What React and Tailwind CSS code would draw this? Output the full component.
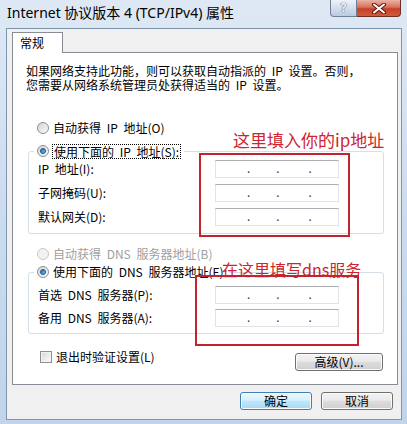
import React from "react";

function Radio({ checked, disabled }) {
    return (
        <span
            className={`flex h-[12px] w-[12px] shrink-0 items-center justify-center rounded-full border ${
                disabled
                    ? "border-[#c9cacb] bg-[#f2f2f2]"
                    : "border-[#8e8f8f] bg-gradient-to-br from-[#d4d4d4] to-[#fbfbfb]"
            }`}
        >
            {checked && (
                <span className="h-[6px] w-[6px] rounded-full border border-[#1b4f8a] bg-gradient-to-br from-[#2a6cb8] to-[#6fc2f3]" />
            )}
        </span>
    );
}

function IpBox() {
    return (
        <div className="flex h-[18px] w-[124px] items-center border border-[#e2e3ea] border-t-[#abadb3] bg-white font-['Noto_Sans',sans-serif] text-[12px] leading-[12px] text-[#333] [word-spacing:0]">
            <span className="ml-[31px]">.</span>
            <span className="ml-[26px]">.</span>
            <span className="ml-[29px]">.</span>
        </div>
    );
}

function Row({ label }) {
    return (
        <div className="flex h-[18px] items-center">
            <div className="w-[186px] pl-[9px]">{label}</div>
            <IpBox />
        </div>
    );
}

function WinButton({ children, primary, className = "" }) {
    return (
        <div
            className={`flex h-[18px] items-center justify-center rounded-[3px] border ${
                primary
                    ? "border-[#3c7fb1] bg-[linear-gradient(#eaf6fd,#d9f0fc_45%,#bee6fd_50%,#a7d9f5)]"
                    : "border-[#707070] bg-[linear-gradient(#f2f2f2,#ebebeb_45%,#dddddd_50%,#cfcfcf)]"
            } shadow-[inset_0_0_0_1px_#fbfbfb] ${className}`}
        >
            {children}
        </div>
    );
}

export default function App() {
    return (
        <div className="relative flex h-[424px] w-[407px] flex-col overflow-hidden bg-gradient-to-b from-[#dfe9f5] via-[#cbdcef] to-[#c0d4eb] text-black">
            {/* title bar */}
            <div className="flex h-[28px] shrink-0 items-start">
                <div className="pl-[7px] pt-[5px] font-['Noto_Sans','Noto_Sans_CJK_SC',sans-serif] text-[14px] leading-[16px]">
                    Internet 协议版本 4 (TCP/IPv4) 属性
                </div>
                <div className="ml-auto mr-[6px] flex">
                    <div className="flex h-[17px] w-[27px] items-center justify-center rounded-bl-[4px] border border-t-0 border-[#6f7f94] bg-[linear-gradient(#eef3f9,#d3dfec_50%,#b9cbe0)] font-['Noto_Sans',sans-serif] text-[12px] font-bold leading-none text-[#f6f8fb] [text-shadow:0_0_1px_#42566e,0_0_1px_#42566e]">
                        ?
                    </div>
                    <div className="flex h-[17px] w-[44px] items-center justify-center rounded-br-[4px] border border-l-0 border-t-0 border-[#6e3024] bg-[linear-gradient(#eab3a4,#d8705a_45%,#c7402a_55%,#d05a3c)]">
                        <svg width="14" height="11" viewBox="0 0 14 11">
                            <path d="M2 1.5 L12 9.5 M12 1.5 L2 9.5" stroke="#5a1a10" strokeWidth="4" strokeLinecap="round" />
                            <path d="M2 1.5 L12 9.5 M12 1.5 L2 9.5" stroke="#ffffff" strokeWidth="2" strokeLinecap="round" />
                        </svg>
                    </div>
                </div>
            </div>

            {/* client area */}
            <div className="mb-[4px] ml-[6px] mr-[5px] flex flex-1 flex-col border border-[#7f94ad] bg-[#f0f0f0] pl-[5px] pr-[3px] pt-[3px] font-['Noto_Sans_CJK_SC',sans-serif] text-[12px] leading-[16px] [word-spacing:3px]">
                <div className="relative z-10 -mb-px flex h-[21px] w-[51px] items-center border border-b-0 border-[#898c95] bg-white pl-[7px]">
                    常规
                </div>
                <div className="flex h-[333px] flex-col border border-[#898c95] bg-white">
                    <div className="pl-[13px] pt-[11px] leading-[14px]">
                        <div>如果网络支持此功能，则可以获取自动指派的 IP 设置。否则，</div>
                        <div>您需要从网络系统管理员处获得适当的 IP 设置。</div>
                    </div>

                    <div className="mt-[28px] flex h-[16px] items-center gap-[4px] pl-[24px]">
                        <Radio />
                        <span>自动获得 IP 地址(O)</span>
                    </div>

                    <fieldset className="ml-[15px] mt-[7px] w-[356px] rounded-[3px] border border-[#d5dfe5] pb-[7px]">
                        <legend className="ml-[5px] px-[3px]">
                            <div className="flex h-[16px] items-center gap-[3px]">
                                <Radio checked />
                                <span className="border border-dotted border-black px-[1px] leading-[13px]">使用下面的 IP 地址(S):</span>
                            </div>
                        </legend>
                        <div className="mt-[1px] flex flex-col gap-[6px]">
                            <Row label="IP 地址(I):" />
                            <Row label="子网掩码(U):" />
                            <Row label="默认网关(D):" />
                        </div>
                    </fieldset>

                    <div className="mt-[12px] flex h-[16px] items-center gap-[4px] pl-[24px] text-[#a0a0a0]">
                        <Radio disabled />
                        <span>自动获得 DNS 服务器地址(B)</span>
                    </div>

                    <fieldset className="ml-[15px] mt-[2px] w-[356px] rounded-[3px] border border-[#d5dfe5] pb-[6px]">
                        <legend className="ml-[5px] px-[3px]">
                            <div className="flex h-[16px] items-center gap-[4px]">
                                <Radio checked />
                                <span>使用下面的 DNS 服务器地址(E):</span>
                            </div>
                        </legend>
                        <div className="mt-[6px] flex flex-col gap-[5px]">
                            <Row label="首选 DNS 服务器(P):" />
                            <Row label="备用 DNS 服务器(A):" />
                        </div>
                    </fieldset>

                    <div className="mt-[15px] flex items-start pl-[27px] pr-[14px]">
                        <div className="flex h-[16px] items-center gap-[4px]">
                            <span className="h-[12px] w-[12px] border border-[#8e8f8f] bg-gradient-to-br from-[#d8d8d8] to-[#fcfcfc] shadow-[inset_0_0_0_1px_#f4f4f4]" />
                            <span>退出时验证设置(L)</span>
                        </div>
                        <WinButton className="ml-auto mt-[4px] w-[88px]">高级(V)...</WinButton>
                    </div>
                </div>

                <div className="mt-[7px] flex justify-end gap-[9px] pr-[5px]">
                    <WinButton primary className="w-[72px]">确定</WinButton>
                    <WinButton className="w-[72px]">取消</WinButton>
                </div>
            </div>

            {/* annotations */}
            <div className="absolute left-[233px] top-[130px] font-['Noto_Sans_CJK_SC',sans-serif] text-[17px] leading-[20px] text-[#cf2430]">
                这里填入你的ip地址
            </div>
            <div className="absolute left-[199px] top-[153px] h-[84px] w-[151px] border-2 border-[#c3222f]" />
            <div className="absolute left-[222px] top-[259px] font-['Noto_Sans_CJK_SC',sans-serif] text-[16px] leading-[20px] text-[#cf2430]">
                在这里填写dns服务
            </div>
            <div className="absolute left-[195px] top-[275px] h-[71px] w-[164px] border-2 border-[#c3222f]" />
        </div>
    );
}
